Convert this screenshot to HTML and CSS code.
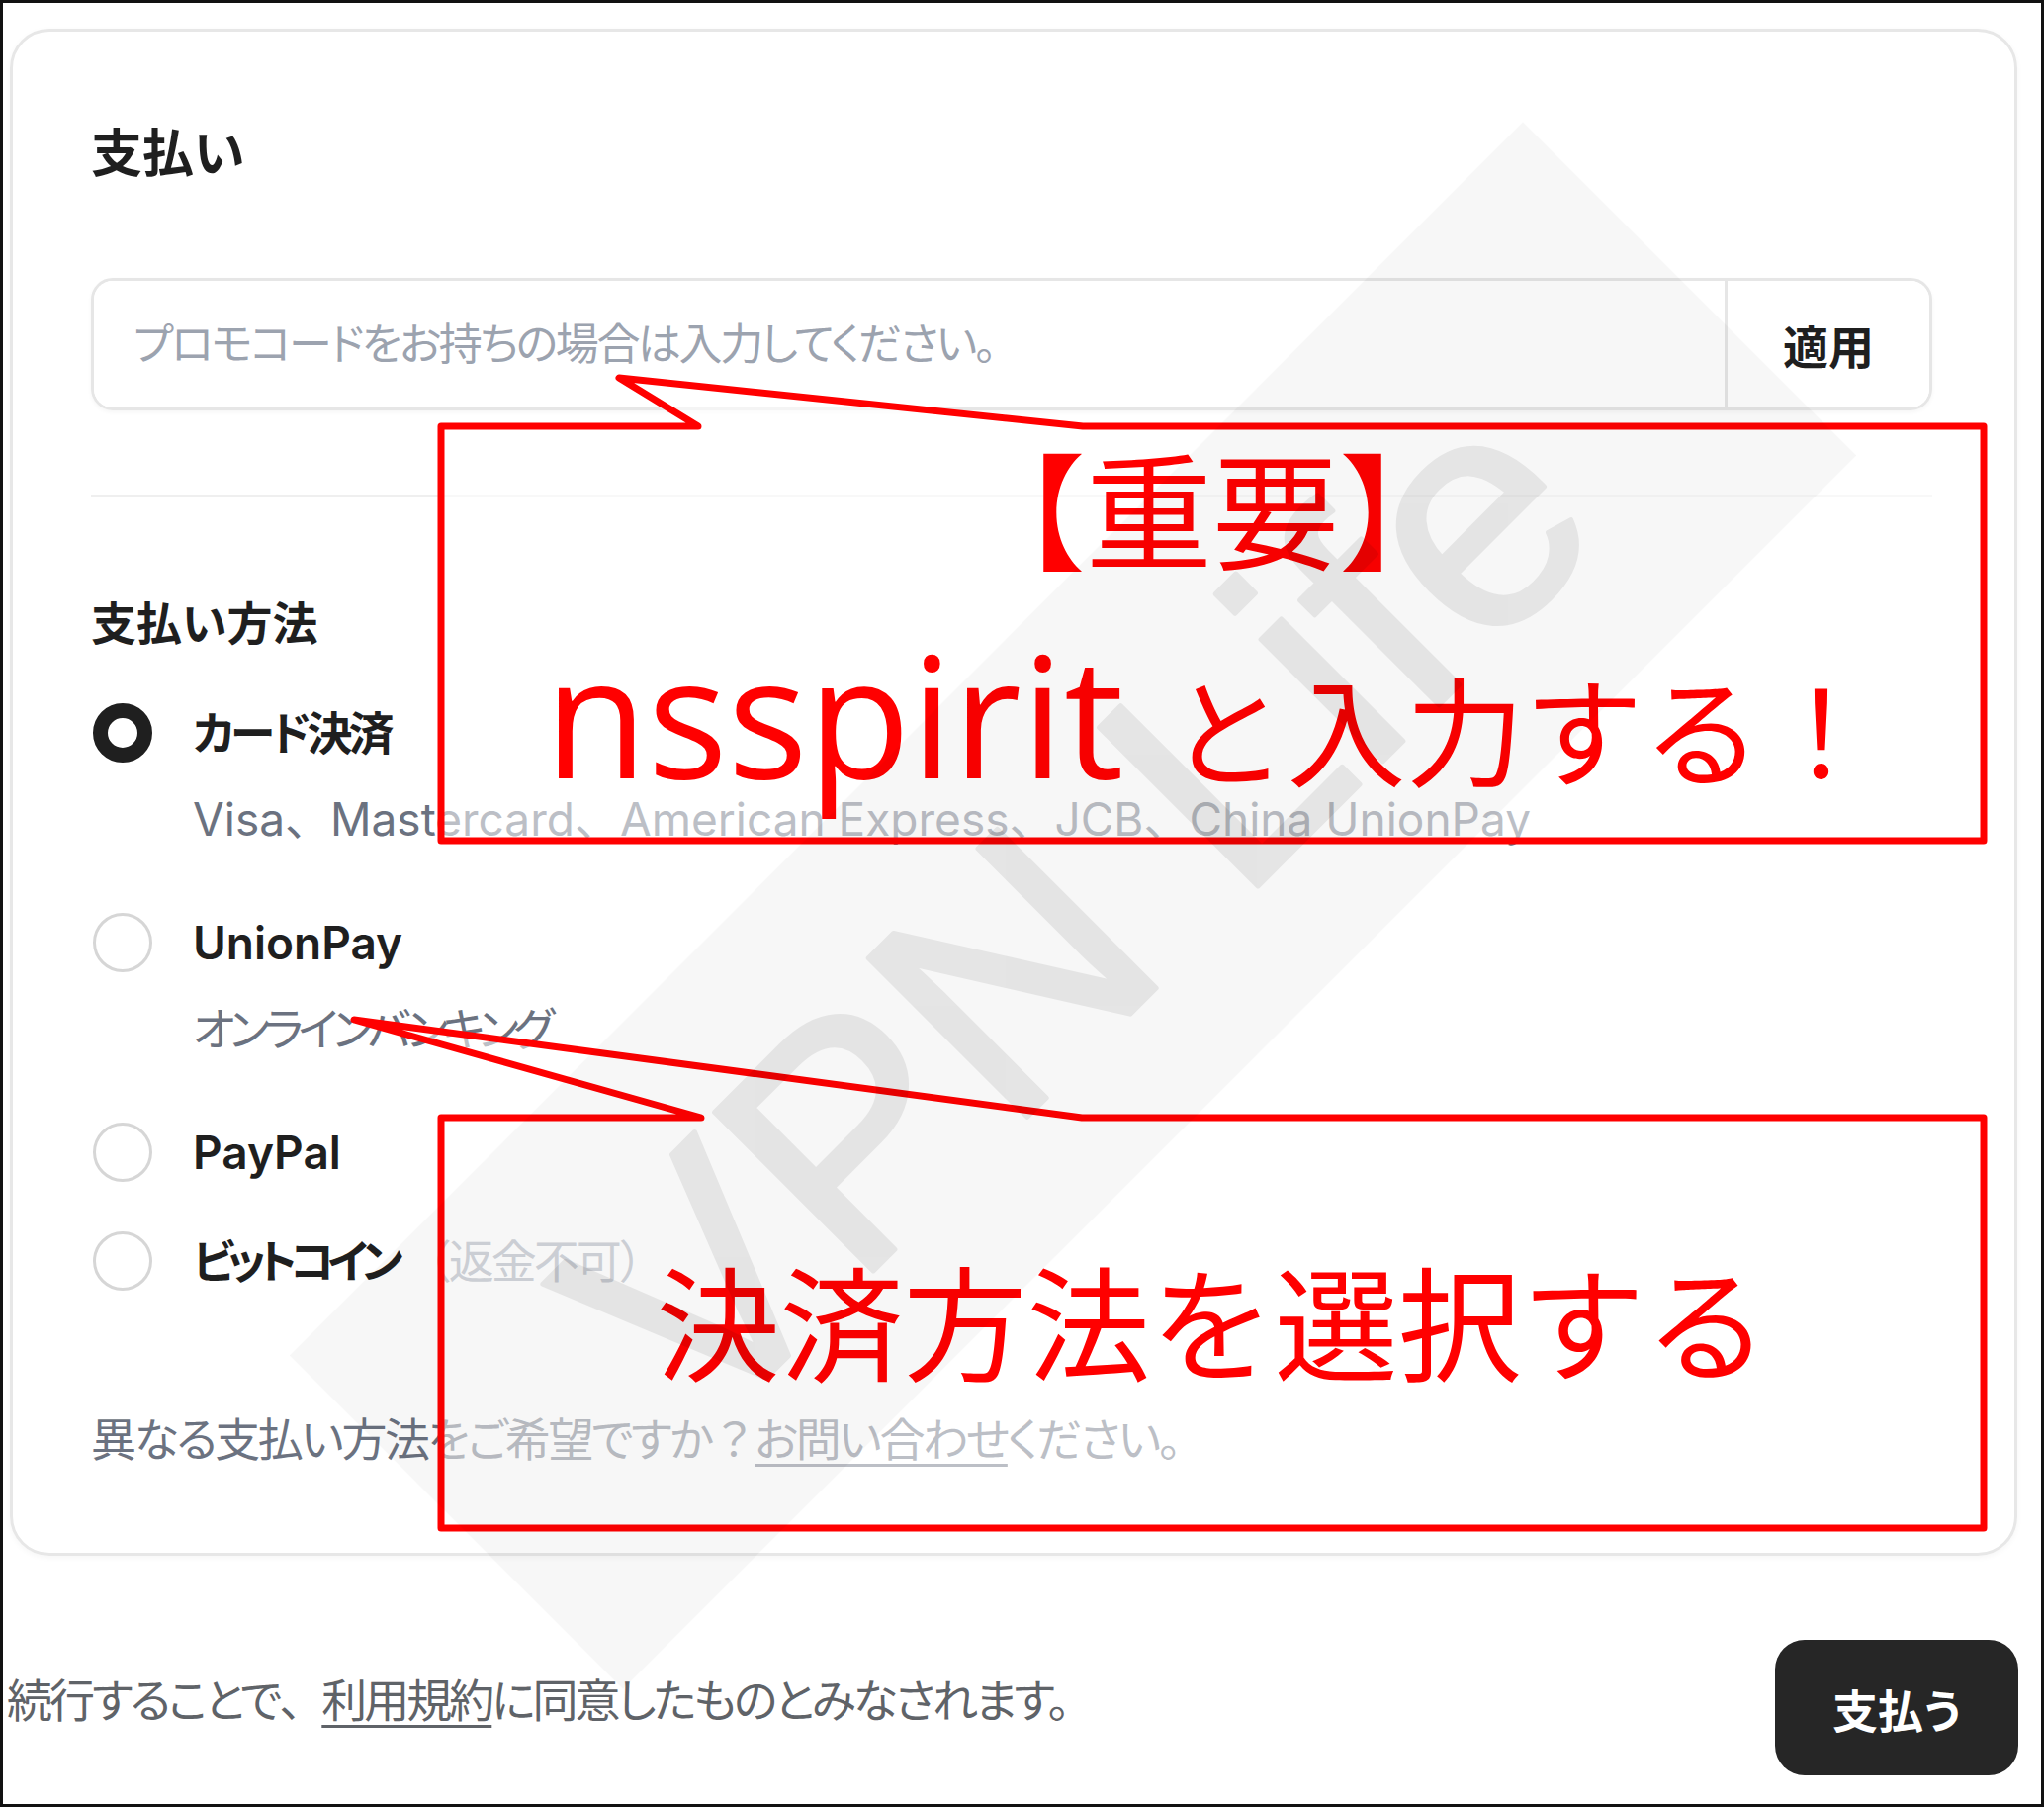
FILE: index.html
```html
<!DOCTYPE html>
<html lang="ja">
<head>
    <meta charset="UTF-8" />
    <title>支払い</title>
    <link rel="stylesheet" href="styles.css">
</head>
<body>
<div class="frame">
    <section class="card">
        <h2 class="title">支払い</h2>
        <div class="promo">
            <input class="promo-input" type="text" placeholder="プロモコードをお持ちの場合は入力してください。">
            <button class="apply-btn">適用</button>
        </div>
        <hr class="divider">
        <h3 class="subtitle">支払い方法</h3>
        <ul class="methods">
            <li class="method">
                <span class="radio checked"></span>
                <div>
                    <div class="method-name kana-card">カード決済</div>
                    <div class="method-desc brands">Visa、Mastercard、American Express、JCB、China UnionPay</div>
                </div>
            </li>
            <li class="method">
                <span class="radio"></span>
                <div>
                    <div class="method-name">UnionPay</div>
                    <div class="method-desc kana-bank">オンラインバンキング</div>
                </div>
            </li>
            <li class="method">
                <span class="radio"></span>
                <div class="method-name">PayPal</div>
            </li>
            <li class="method">
                <span class="radio"></span>
                <div class="method-name"><span class="kana-btc">ビットコイン</span><span class="method-note">（返金不可）</span></div>
            </li>
        </ul>
        <p class="help">異なる支払い方法をご希望ですか<span class="full">？</span><a href="#">お問い合わせ</a>ください。</p>
    </section>
    <footer class="footer">
        <p class="terms">続行することで<span class="full">、</span><a href="#">利用規約</a>に同意したものとみなされます。</p>
        <button class="pay-btn">支払う</button>
    </footer>

    <!-- annotations drawn over the screenshot -->
    <div class="overlay">
        <svg class="bubbles" width="2067" height="1827" viewBox="0 0 2067 1827">
            <path class="bubble" d="M446 431 H706 L626 382 L1095 431 H2006 V850 H446 Z"/>
            <path class="bubble" d="M446 1130 H709 L358 1031 L1094 1130 H2006 V1545 H446 Z"/>
        </svg>
        <div class="note note-promo">
            <div class="note-tag">【重要】</div>
            <div class="note-code">nsspirit<span class="note-jp">と入力する！</span></div>
        </div>
        <div class="note note-method">決済方法を選択する</div>
        <div class="watermark">
            <svg width="1764" height="477" viewBox="0 0 1764 477">
                <g class="wm-text">
                    <text x="882" y="357" text-anchor="middle">VPN Life</text>
                </g>
            </svg>
        </div>
    </div>
</div>
</body>
</html>
```

FILE: styles.css
```css
* {
    box-sizing: border-box;
}
body {
    margin: 0;
    background: #fff;
    font-family: 'Inter', 'Noto Sans CJK JP', sans-serif;
    font-feature-settings: "palt";
    color: #1f1f1f;
}
.frame {
    position: relative;
    width: 2067px;
    height: 1827px;
    border: 3px solid #111;
    overflow: hidden;
}
.card {
    margin: 26px 24px 0 7px;
    padding: 90px 83px 85px 79px;
    border: 3px solid #e7e7e7;
    border-radius: 40px;
    box-shadow: 0 2px 6px rgba(0, 0, 0, 0.04);
}
.title {
    margin: 0;
    font-size: 52px;
    line-height: 67px;
    font-weight: 700;
}
.promo {
    display: flex;
    height: 134px;
    margin-top: 92px;
    border: 3px solid #e6e6e6;
    border-radius: 22px;
    overflow: hidden;
    box-shadow: 0 2px 4px rgba(0, 0, 0, 0.04);
}
.promo-input {
    flex: 1;
    min-width: 0;
    border: none;
    outline: none;
    padding: 0 40px;
    background: #fff;
    font-family: inherit;
    font-feature-settings: "palt";
    font-size: 44px;
    letter-spacing: -2.4px;
    color: #333;
}
.promo-input::placeholder {
    color: #9ca3af;
}
.apply-btn {
    width: 207px;
    border: none;
    border-left: 3px solid #e6e6e6;
    background: #fff;
    font-family: inherit;
    font-size: 46px;
    font-weight: 700;
    color: #1f1f1f;
}
.divider {
    height: 2px;
    margin: 85px 0 0;
    border: 0;
    background: #efefef;
}
.subtitle {
    margin: 99px 0 0;
    font-size: 46px;
    line-height: 58px;
    font-weight: 700;
}
.methods {
    display: flex;
    flex-direction: column;
    gap: 50px;
    margin: 52px 0 0;
    padding: 0;
    list-style: none;
}
.method {
    display: flex;
    align-items: flex-start;
    gap: 41px;
}
.radio {
    flex: none;
    width: 60px;
    height: 60px;
    margin-left: 2px;
    border: 3px solid #d6d6d6;
    border-radius: 50%;
}
.radio.checked {
    border: 15px solid #1f1f1f;
}
.method-name {
    font-size: 46px;
    line-height: 60px;
    font-weight: 600;
}
.kana-card {
    letter-spacing: -4px;
}
.kana-btc {
    letter-spacing: -7px;
}
.method-note {
    margin-left: 10px;
    font-weight: 400;
    font-feature-settings: normal;
    letter-spacing: -3px;
    color: #9ca3af;
}
.method-desc {
    margin-top: 27px;
    padding-bottom: 15px;
    font-size: 46px;
    line-height: 60px;
    color: #6b7280;
}
.brands {
    font-feature-settings: normal;
}
.kana-bank {
    letter-spacing: -5.5px;
}
.full {
    font-feature-settings: normal;
}
.help {
    margin: 120px 0 0;
    font-size: 46px;
    line-height: 60px;
    letter-spacing: -2.4px;
    color: #6b7280;
}
.help a, .terms a {
    color: inherit;
    text-decoration: underline;
    text-decoration-thickness: 3px;
    text-underline-offset: 8px;
}
.footer {
    display: flex;
    align-items: center;
    justify-content: space-between;
    margin-top: 85px;
    padding: 0 23px 0 4px;
}
.terms {
    margin: 0 0 16px;
    font-size: 46px;
    line-height: 60px;
    letter-spacing: -3px;
    color: #5f6368;
}
.pay-btn {
    width: 246px;
    height: 137px;
    border: none;
    border-radius: 30px;
    background: #262626;
    color: #fff;
    font-family: inherit;
    font-feature-settings: "palt";
    font-size: 46px;
    font-weight: 700;
}

/* annotation layer */
.overlay {
    position: absolute;
    left: -3px;
    top: -3px;
    width: 2067px;
    height: 1827px;
    pointer-events: none;
}
.bubbles {
    position: absolute;
    left: 0;
    top: 0;
}
.bubble {
    fill: rgba(255, 255, 255, 0.55);
    stroke: #ff0000;
    stroke-width: 7;
    stroke-linejoin: round;
}
.note {
    position: absolute;
    left: 446px;
    width: 1560px;
    display: flex;
    flex-direction: column;
    align-items: center;
    color: #ff0000;
    font-family: 'Noto Sans CJK JP', sans-serif;
    font-feature-settings: normal;
    font-weight: 400;
}
.note-promo {
    top: 431px;
    height: 419px;
    padding-top: 17px;
}
.note-tag {
    font-size: 128px;
    line-height: 1;
}
.note-code {
    margin-top: 60px;
    font-family: 'Open Sans', sans-serif;
    font-size: 170px;
    line-height: 1;
}
.note-jp {
    margin-left: 45px;
    font-family: 'Noto Sans CJK JP', sans-serif;
    font-size: 120px;
    line-height: 1;
}
.note-method {
    top: 1130px;
    height: 415px;
    padding-bottom: 10px;
    justify-content: center;
    font-size: 125px;
    line-height: 1;
}
.watermark {
    position: absolute;
    left: 203px;
    top: 677px;
    width: 1764px;
    height: 477px;
    background: rgba(0, 0, 0, 0.03);
    transform: rotate(-45deg);
}
.wm-text {
    opacity: 0.07;
    fill: #000;
    stroke: #000;
    stroke-width: 5;
    stroke-linejoin: round;
    font-family: 'Liberation Sans', sans-serif;
    font-size: 330px;
}
```
